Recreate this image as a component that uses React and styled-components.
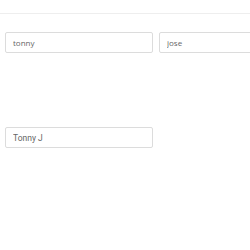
import React from "react";
import styled, { createGlobalStyle } from "styled-components";

const Global = createGlobalStyle`
  html, body { margin: 0; padding: 0; background: #fff; }
  body { font-family: "Open Sans", "Liberation Sans", sans-serif; overflow: hidden; }
`;

const Page = styled.div`
  width: 250px;
  height: 250px;
  overflow: hidden;
`;

const Header = styled.div`
  height: 13px;
  border-bottom: 1px solid #eeeeee;
`;

const Body = styled.div`
  padding: 18px 0 0 5px;
  display: flex;
  flex-direction: column;
  gap: 74px;
`;

const Row = styled.div`
  display: flex;
  gap: 6px;
  width: 400px;
`;

const Field = styled.input`
  box-sizing: border-box;
  width: 148px;
  height: 21px;
  padding: 0 0 0 7px;
  border: 1px solid #dcdcdc;
  border-radius: 2px;
  background: #fff;
  color: ${(p) => (p.$alt ? "#666" : "#666")};
  font-family: ${(p) =>
    p.$alt ? '"Roboto", "Liberation Sans", sans-serif' : '"Open Sans", "Liberation Sans", sans-serif'};
  font-size: ${(p) => (p.$alt ? "8.5px" : "8px")};
  outline: none;
`;

export default function App() {
  return (
    <Page>
      <Global />
      <Header />
      <Body>
        <Row>
          <Field defaultValue="tonny" />
          <Field defaultValue="jose" />
        </Row>
        <Row>
          <Field $alt defaultValue="Tonny J" />
        </Row>
      </Body>
    </Page>
  );
}
